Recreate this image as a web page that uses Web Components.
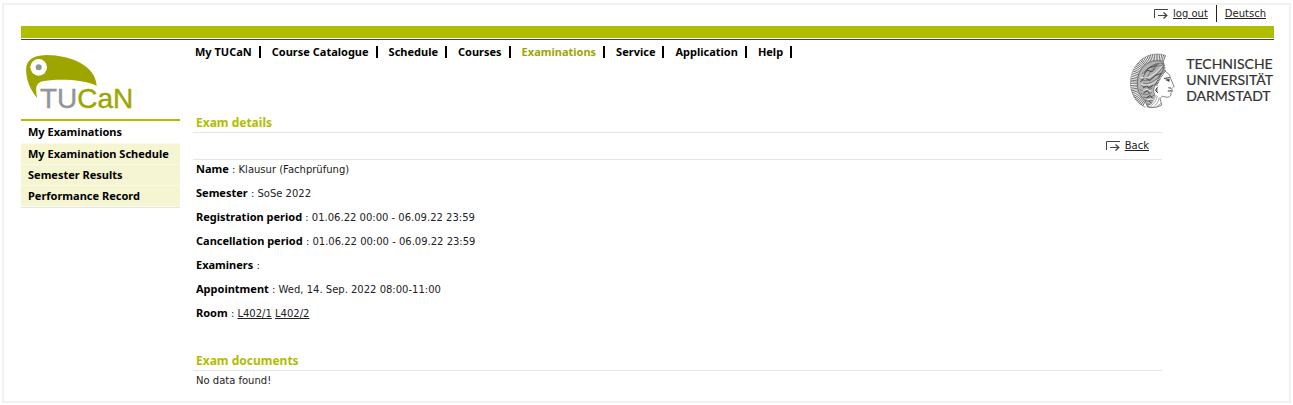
<!DOCTYPE html>
<html lang="en">
<head>
<meta charset="utf-8">
<title>TUCaN - Exam details</title>
<style>
  body {
    margin: 0;
    background: #fff;
    color: #222;
    font: 10px/12px Verdana, "DejaVu Sans", sans-serif;
    --bold: bold 11px/12px "Noto Sans", "Open Sans", sans-serif;
    --green: #b1bd00;
    --logo-green: #9da600;
    --rule: #e6e6e6;
    --frame: #f1f1f1;
  }
</style>
</head>
<body>
<tucan-page>
  <tucan-topbar slot="top">
    <arrow-link href="#logout">log out</arrow-link>
    <a href="#deutsch">Deutsch</a>
  </tucan-topbar>
  <tucan-logo slot="logo"></tucan-logo>
  <tucan-nav slot="nav">
    <a href="#my">My TUCaN</a>
    <a href="#catalogue">Course Catalogue</a>
    <a href="#schedule">Schedule</a>
    <a href="#courses">Courses</a>
    <a href="#exams" aria-current="page">Examinations</a>
    <a href="#service">Service</a>
    <a href="#application">Application</a>
    <a href="#help">Help</a>
  </tucan-nav>
  <tu-brand slot="brand"></tu-brand>
  <tucan-menu slot="menu">
    <a href="#examinations" aria-current="page">My Examinations</a>
    <a href="#exam-schedule">My Examination Schedule</a>
    <a href="#results">Semester Results</a>
    <a href="#record">Performance Record</a>
  </tucan-menu>
  <exam-section heading="Exam details">
    <arrow-link slot="tools" href="#back">Back</arrow-link>
    <exam-field label="Name">Klausur (Fachprüfung)</exam-field>
    <exam-field label="Semester">SoSe 2022</exam-field>
    <exam-field label="Registration period">01.06.22 00:00 - 06.09.22 23:59</exam-field>
    <exam-field label="Cancellation period">01.06.22 00:00 - 06.09.22 23:59</exam-field>
    <exam-field label="Examiners"></exam-field>
    <exam-field label="Appointment">Wed, 14. Sep. 2022 08:00-11:00</exam-field>
    <exam-field label="Room"><a href="#l402-1">L402/1</a> <a href="#l402-2">L402/2</a></exam-field>
  </exam-section>
  <exam-section heading="Exam documents">
    <exam-note>No data found!</exam-note>
  </exam-section>
</tucan-page>

<script>
const define = (name, html) => customElements.define(name, class extends HTMLElement {
  constructor() {
    super();
    const template = document.createElement('template');
    template.innerHTML = html;
    this.attachShadow({ mode: 'open' }).append(template.content.cloneNode(true));
  }
  connectedCallback() {
    for (const el of this.shadowRoot.querySelectorAll('[data-attr]'))
      el.textContent = this.getAttribute(el.dataset.attr);
    const link = this.shadowRoot.querySelector('a[data-href]');
    if (link) link.href = this.getAttribute('href');
  }
});

define('tucan-page', `
  <style>
    :host { display: block; box-sizing: border-box; margin: 3px 2px 2px;
      border: 2px solid var(--frame); padding: 0 15px 10px 17px; }
    .bar { height: 12px; background: var(--green); }
    .line { height: 1px; margin-top: 1px; background: #444; }
    header, .body { display: grid; column-gap: 13px; }
    header { grid-template-columns: 159px 1fr auto; min-height: 76px; align-items: start; }
    .body { grid-template-columns: 159px 1fr; align-items: start; }
    main { margin-right: 112px; display: grid; row-gap: 26px; }
    aside { margin-top: 3px; }
  </style>
  <slot name="top"></slot>
  <div class="bar"></div><div class="line"></div>
  <header><slot name="logo"></slot><slot name="nav"></slot><slot name="brand"></slot></header>
  <div class="body"><aside><slot name="menu"></slot></aside><main><slot></slot></main></div>`);

define('tucan-topbar', `
  <style>
    :host { display: flex; justify-content: flex-end; height: 21px; padding-right: 8px; }
    ::slotted(*) { line-height: 18px; height: 17px; color: #222; }
    ::slotted(a) { margin-left: 8px; padding-left: 8px; border-left: 1px solid #222; }
  </style><slot></slot>`);

define('arrow-link', `
  <style>
    :host { display: flex; align-items: center; gap: 5px; }
    svg { width: 14px; height: 10px; }
    a { color: #222; }
  </style>
  <svg viewBox="0 0 14 10" fill="none" stroke="#444" aria-hidden="true">
    <path d="M.5 9V.5H14M4 6.5H12.5"/><path d="M9.5 3.5L12.8 6.5L9.5 9.5" stroke-width="1.3"/>
  </svg>
  <a data-href><slot></slot></a>`);

define('tucan-logo', `
  <style>
    :host { display: grid; padding: 15px 0 0 5px; }
    svg, span { grid-area: 1 / 1; }
    svg { width: 71px; height: 43px; }
    span { margin: 30px 0 0 14px; font: 28px/28px "Liberation Sans", Arial, sans-serif;
      color: var(--logo-green); -webkit-text-stroke: 0.4px currentColor; white-space: nowrap; }
    i { font-style: normal; color: #929599; }
  </style>
  <svg viewBox="76 165 213 129" aria-hidden="true">
    <path fill="#9da600" d="M110 294C88 270 73 232 77 200C82 175 105 165 140 165C205 166 284 193 288 257C250 239 180 236 130 243C105 247 103 264 110 294Z"/>
    <circle cx="114" cy="202" r="25" fill="#fff"/><circle cx="114" cy="202" r="9" fill="#8d959c"/>
  </svg>
  <span><i>TU</i>CaN</span>`);

define('tucan-nav', `
  <style>
    :host { display: flex; flex-wrap: wrap; gap: 11px; padding: 6px 0 0 2px; }
    ::slotted(a) { padding-right: 7px; border-right: 2px solid #000; color: #000;
      font: var(--bold); text-decoration: none; }
    ::slotted(a[aria-current]) { color: var(--logo-green); }
  </style><slot></slot>`);

define('tu-brand', `
  <style>
    :host { display: flex; gap: 10px; padding: 13px 1px 0 0; }
    svg { width: 47px; height: 55px; }
    div { margin-top: 3px; font: 14px/16px Lato, "Open Sans", sans-serif; color: #333;
      -webkit-text-stroke: 0.2px currentColor; }
  </style>
  <svg viewBox="24 12 138 166" fill="none" stroke="#555" stroke-width="2" aria-hidden="true">
    <path stroke="#777" d="M133 20C95 5 50 25 33 68C18 105 28 153 72 176M126 38C90 26 58 48 50 82C42 112 50 140 70 154"/>
    <path stroke="#666" stroke-width="19" stroke-dasharray="2.5 2.5" d="M130 29C92 15 55 36 42 75C30 110 38 148 70 165"/>
    <path fill="#b4b4b4" d="M126 38C90 28 58 50 50 82C43 115 51 139 70 154L78 175C94 177 109 174 118 169L109 151C100 142 95 131 98 116L110 91L126 61Z"/>
    <path d="M125 43C94 39 70 62 64 91M122 50C101 48 84 65 77 88M61 75C75 60 95 48 113 45M58 91C75 103 99 88 125 54M65 103C86 109 106 94 127 65M58 110C72 119 92 114 105 104M55 122C67 131 83 126 92 117M57 134C70 139 83 137 91 131M65 145C76 149 91 145 99 139M71 156C84 159 99 153 107 151M74 166C88 170 103 164 113 162"/>
    <path stroke="#444" stroke-width="3" d="M67 74L79 64L91 69L101 58M56 99L70 87L85 95L101 80L119 74M64 118L76 110L82 119L94 110M66 132L78 126L84 134M75 147L86 140L93 149M83 157L91 165L104 156M75 63C85 51 99 57 107 47"/>
    <path stroke="#e8e8e8" stroke-width="3" d="M56 85C80 94 102 76 125 48M58 106C82 116 107 100 126 72M63 127L76 122L89 127M77 153L91 151L100 157"/>
    <path fill="#fff" stroke="none" d="M128 66C137 70 146 76 147 87L158 113L151 120L153 128L148 132L149 138C145 148 132 146 123 142L116 150L121 169C108 177 91 178 78 173C91 167 103 153 103 137C98 132 98 120 105 111L113 93Z"/>
    <path stroke="#444" d="M128 66C137 70 146 76 147 87L158 113L151 120L153 128L148 132L149 138C145 148 132 146 123 142L116 150L121 169C108 177 91 178 78 173"/>
    <path fill="#999" stroke="#333" stroke-width="3" d="M108 115L102 125L109 132M128 89L145 86M139 127L151 126M141 117L149 118"/>
    <path fill="#222" d="M133 93L144 91L143 98Z"/>
    <path stroke="#777" d="M106 140C109 150 99 164 87 172M113 146C113 158 105 168 96 174M119 164L104 175"/>
    <path stroke="#666" stroke-width="8" stroke-dasharray="3 2" d="M104 110L114 88L129 66L125 42"/>
  </svg>
  <div>TECHNISCHE<br>UNIVERSITÄT<br>DARMSTADT</div>`);

define('tucan-menu', `
  <style>
    :host { display: block; border-top: 2px solid var(--green); border-bottom: 1px solid var(--rule); }
    ::slotted(a) { display: block; padding: 4px 7px; border-bottom: 1px solid #fafae8;
      background: #f5f5d2; color: #000; font: var(--bold); text-decoration: none; }
    ::slotted(a[aria-current]) { background: #fff; padding-top: 5px; padding-bottom: 5px; }
  </style><nav><slot></slot></nav>`);

define('exam-section', `
  <style>
    :host { display: block; }
    h1 { margin: 0; padding: 0 3px 2px; border-bottom: 1px solid var(--rule);
      font: var(--bold); font-size: 12px; line-height: 14px; color: var(--green); }
    slot[name]::slotted(*) { height: 26px; justify-content: flex-end; padding-right: 13px;
      border-bottom: 1px solid var(--rule); }
  </style>
  <h1 data-attr="heading"></h1><slot name="tools"></slot><slot></slot>`);

define('exam-field', `
  <style>
    :host { display: block; padding: 4px 3px 8px; }
    b { color: #000; font: var(--bold); line-height: 0; }
    ::slotted(a) { color: #222; }
  </style><b data-attr="label"></b> : <slot></slot>`);

define('exam-note', `<style>:host { display: block; padding: 4px 3px; }</style><slot></slot>`);
</script>
</body>
</html>
